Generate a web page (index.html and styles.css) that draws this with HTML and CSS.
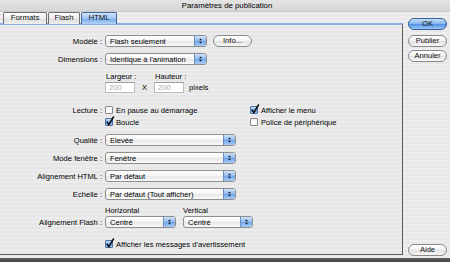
FILE: index.html
```html
<!DOCTYPE html>
<html lang="fr">
<head>
<meta charset="utf-8">
<title>Paramètres de publication</title>
<link rel="stylesheet" href="styles.css">
</head>
<body>
<div class="window">
  <div class="titlebar">Paramètres de publication</div>
  <div class="main">
    <div class="left">
      <div class="tabs">
        <div class="tab w-formats">Formats</div>
        <div class="tab w-flash">Flash</div>
        <div class="tab sel w-html">HTML</div>
      </div>
      <div class="panel">
        <div class="row h12">
          <div class="label">Modèle :</div>
          <div class="select w102"><span>Flash seulement</span><i class="arrows"><svg viewBox="0 0 12 12"><path d="M4.2 5.2 L6 3 L7.8 5.2Z M4.2 6.8 L6 9 L7.8 6.8Z"/></svg></i></div>
          <div class="btn info">Info...</div>
        </div>
        <div class="row h12 mt6">
          <div class="label">Dimensions :</div>
          <div class="select w102"><span>Identique à l'animation</span><i class="arrows"><svg viewBox="0 0 12 12"><path d="M4.2 5.2 L6 3 L7.8 5.2Z M4.2 6.8 L6 9 L7.8 6.8Z"/></svg></i></div>
        </div>
        <div class="row h10 mt6">
          <div class="label"></div>
          <div class="sizelbl">Largeur :</div>
          <div class="sizelbl">Hauteur :</div>
        </div>
        <div class="row h11 mt1">
          <div class="label"></div>
          <div class="input">200</div>
          <div class="xsep">X</div>
          <div class="input">200</div>
          <div class="unit">pixels</div>
        </div>
        <div class="row h8 mt13">
          <div class="label">Lecture :</div>
          <div class="check col1"><i class="box"></i><span>En pause au démarrage</span></div>
          <div class="check"><i class="box on"><svg viewBox="0 0 10 10"><path d="M1.8 4.6 L3.8 7.6 L8.8 -0.5"/></svg></i><span>Afficher le menu</span></div>
        </div>
        <div class="row h8 mt4">
          <div class="label"></div>
          <div class="check col1"><i class="box on"><svg viewBox="0 0 10 10"><path d="M1.8 4.6 L3.8 7.6 L8.8 -0.5"/></svg></i><span>Boucle</span></div>
          <div class="check"><i class="box"></i><span>Police de périphérique</span></div>
        </div>
        <div class="row h12 mt8">
          <div class="label">Qualité :</div>
          <div class="select w131"><span>Elevée</span><i class="arrows"><svg viewBox="0 0 12 12"><path d="M4.2 5.2 L6 3 L7.8 5.2Z M4.2 6.8 L6 9 L7.8 6.8Z"/></svg></i></div>
        </div>
        <div class="row h12 mt6">
          <div class="label">Mode fenêtre :</div>
          <div class="select w131"><span>Fenêtre</span><i class="arrows"><svg viewBox="0 0 12 12"><path d="M4.2 5.2 L6 3 L7.8 5.2Z M4.2 6.8 L6 9 L7.8 6.8Z"/></svg></i></div>
        </div>
        <div class="row h12 mt6">
          <div class="label">Alignement HTML :</div>
          <div class="select w131"><span>Par défaut</span><i class="arrows"><svg viewBox="0 0 12 12"><path d="M4.2 5.2 L6 3 L7.8 5.2Z M4.2 6.8 L6 9 L7.8 6.8Z"/></svg></i></div>
        </div>
        <div class="row h12 mt6">
          <div class="label">Echelle :</div>
          <div class="select w131"><span>Par défaut (Tout afficher)</span><i class="arrows"><svg viewBox="0 0 12 12"><path d="M4.2 5.2 L6 3 L7.8 5.2Z M4.2 6.8 L6 9 L7.8 6.8Z"/></svg></i></div>
        </div>
        <div class="row h10 mt5">
          <div class="label"></div>
          <div class="alignlbl">Horizontal</div>
          <div>Vertical</div>
        </div>
        <div class="row h12 mt1">
          <div class="label">Alignement Flash :</div>
          <div class="select w71"><span>Centré</span><i class="arrows"><svg viewBox="0 0 12 12"><path d="M4.2 5.2 L6 3 L7.8 5.2Z M4.2 6.8 L6 9 L7.8 6.8Z"/></svg></i></div>
          <div class="select w70 ml7"><span>Centré</span><i class="arrows"><svg viewBox="0 0 12 12"><path d="M4.2 5.2 L6 3 L7.8 5.2Z M4.2 6.8 L6 9 L7.8 6.8Z"/></svg></i></div>
        </div>
        <div class="row h8 mt12">
          <div class="label"></div>
          <div class="check"><i class="box on"><svg viewBox="0 0 10 10"><path d="M1.8 4.6 L3.8 7.6 L8.8 -0.5"/></svg></i><span>Afficher les messages d'avertissement</span></div>
        </div>
      </div>
    </div>
    <div class="side">
      <div class="btn ok">OK</div>
      <div class="btn pub">Publier</div>
      <div class="btn ann">Annuler</div>
      <div class="btn aide">Aide</div>
    </div>
  </div>
  <div class="bottom"></div>
</div>
</body>
</html>
```
FILE: styles.css
```css
* { box-sizing: border-box; }
html, body { margin: 0; padding: 0; }
body {
  width: 450px;
  height: 262px;
  overflow: hidden;
  font-family: "Liberation Sans", Arial, sans-serif;
  font-size: 7.6px;
  color: #000;
}
.window {
  width: 450px;
  height: 262px;
  display: flex;
  flex-direction: column;
  background: repeating-linear-gradient(to bottom, #eeeeee 0 2px, #e8e8e8 2px 4px);
}
.titlebar {
  height: 12px;
  line-height: 12px;
  text-align: center;
  font-size: 7.8px;
  padding-left: 4px;
  background: linear-gradient(#e4e4e4, #d6d6d6);
  border-bottom: 1px solid #c9c9c9;
}
.main {
  height: 246px;
  display: flex;
}
.left {
  width: 403px;
  display: flex;
  flex-direction: column;
}
.tabs {
  height: 11px;
  display: flex;
  padding-left: 3px;
  position: relative;
  z-index: 1;
}
.tab {
  height: 12px;
  line-height: 10px;
  text-align: center;
  font-size: 7.8px;
  border: 1px solid #6f6f6f;
  border-bottom: none;
  border-radius: 2px 2px 0 0;
  background: linear-gradient(#ffffff, #ececec 50%, #dcdcdc 51%, #f0f0f0);
  margin-right: 1px;
  color: #111;
}
.tab.sel {
  background: linear-gradient(#cfe3fb, #9ec4f1 50%, #76abea 51%, #b2d2f6);
  border-color: #46699a;
}
.w-formats { width: 44px; }
.w-flash { width: 32px; }
.w-html { width: 36px; }
.panel {
  height: 232px;
  border-top: 2px solid #8eb4e3;
  border-right: 1px solid #5a5a5a;
  border-bottom: 1px solid #5a5a5a;
  padding-top: 10px;
  background: repeating-linear-gradient(to bottom, #ececec 0 2px, #e6e6e6 2px 4px);
}
.row {
  display: flex;
  align-items: center;
}
.h12 { height: 12px; }
.h11 { height: 11px; }
.h10 { height: 10px; }
.h8 { height: 8px; }
.mt1 { margin-top: 1px; }
.mt4 { margin-top: 4px; }
.mt5 { margin-top: 5px; }
.mt6 { margin-top: 6px; }
.mt8 { margin-top: 8px; }
.mt12 { margin-top: 12px; }
.mt13 { margin-top: 13px; }
.ml7 { margin-left: 7px; }
.label {
  width: 102px;
  flex: none;
  text-align: right;
  margin-right: 3px;
  white-space: nowrap;
}
.select {
  height: 12px;
  display: flex;
  align-items: center;
  border: 1px solid #8e8e8e;
  border-radius: 3px;
  background: linear-gradient(#ffffff, #f4f4f4 50%, #e6e6e6 51%, #fafafa);
  overflow: hidden;
  flex: none;
}
.select span {
  flex: 1;
  padding-left: 4px;
  white-space: nowrap;
  overflow: hidden;
}
.select .arrows {
  width: 12px;
  height: 10px;
  flex: none;
  border-left: 1px solid #6a8fbf;
  background: linear-gradient(#cfe2fa, #8fbaf0 50%, #6ea3e8 51%, #a9cdf6);
  display: flex;
  align-items: center;
  justify-content: center;
}
.select .arrows svg { width: 11px; height: 10px; fill: #111; }
.w102 { width: 102px; }
.w131 { width: 131px; }
.w71 { width: 71px; }
.w70 { width: 70px; }
.btn {
  height: 12px;
  line-height: 10px;
  text-align: center;
  border: 1px solid #8a8a8a;
  border-radius: 6px;
  background: linear-gradient(#ffffff, #f2f2f2 50%, #e0e0e0 51%, #f8f8f8);
  color: #111;
}
.info { width: 39px; margin-left: 6px; }
.sizelbl { width: 49px; padding-left: 1px; }
.input {
  width: 30px;
  height: 11px;
  line-height: 10px;
  border: 1px solid #bcbcbc;
  border-top-color: #9a9a9a;
  background: #fff;
  color: #a8a8a8;
  padding-left: 3px;
}
.xsep { width: 19px; text-align: center; }
.unit { margin-left: 5px; }
.check {
  display: flex;
  align-items: center;
  white-space: nowrap;
}
.col1 { width: 145px; }
.box {
  width: 8px;
  height: 8px;
  flex: none;
  border: 1px solid #8a8a8a;
  border-radius: 1px;
  background: linear-gradient(#f4f4f4, #ffffff);
  margin-right: 3px;
  position: relative;
}
.box.on {
  border-color: #4d6f9e;
  background: linear-gradient(#cfe2fa, #7aaeea 50%, #5d98e2 51%, #9fc6f4);
}
.box svg {
  position: absolute;
  left: -1px;
  top: -2px;
  width: 10px;
  height: 10px;
  fill: none;
  stroke: #0d0d0d;
  stroke-width: 1.5;
  overflow: visible;
}
.alignlbl { width: 78px; }
.side {
  width: 47px;
  display: flex;
  flex-direction: column;
  padding-left: 5px;
}
.side .btn { width: 39px; }
.ok {
  margin-top: 6px;
  border-color: #36609a;
  background: linear-gradient(#c9e0fa, #7fb2ee 50%, #4e8fe2 51%, #9cc7f5);
}
.pub { margin-top: 5px; }
.ann { margin-top: 3px; }
.aide { margin-top: auto; margin-bottom: 2px; }
.bottom {
  height: 4px;
  background: linear-gradient(#5e5e5e, #424242);
}
```
